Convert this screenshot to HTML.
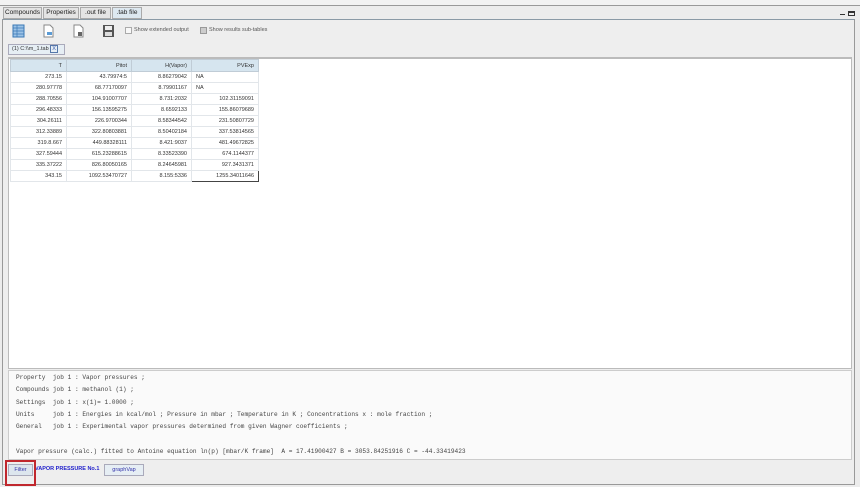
<!DOCTYPE html>
<html><head><style>
*{box-sizing:border-box;margin:0;padding:0}
body{width:860px;height:487px;background:#ececec;font-family:"Liberation Sans",sans-serif;font-size:6px;color:#333;position:relative;overflow:hidden}
.a{position:absolute}
.tab{position:absolute;top:7px;height:12px;border:1px solid #aaa;background:#e4e4e4;font-size:6.5px;text-align:center;line-height:10px;color:#222}
table{border-collapse:collapse;position:absolute;left:10px;top:59px;font-size:5.5px;color:#333;table-layout:fixed;width:248px}
td{height:11px;border:1px solid #e2e6ea;text-align:right;padding-right:4px;overflow:hidden;white-space:nowrap}
th{height:12px;background:#d6e5ef;font-weight:normal;text-align:right;padding-right:4px;border:1px solid #c0ccd6}
pre{font-family:"Liberation Mono",monospace;font-size:6.15px;line-height:12.3px;color:#444}
</style></head><body>
<div class="a" style="left:0;top:0;width:860px;height:6px;background:#f2f2f2;border-bottom:1px solid #999"></div>
<div class="a" style="left:2px;top:19px;width:853px;height:466px;border:1px solid #999;border-top:1px solid #8a9aa6;background:#eee"></div>
<div class="tab" style="left:3px;width:39px">Compounds</div>
<div class="tab" style="left:43px;width:36px">Properties</div>
<div class="tab" style="left:80px;width:31px">.out file</div>
<div class="tab" style="left:112px;width:30px;background:#dde8f0">.tab file</div>
<div class="a" style="left:840px;top:14px;width:5px;height:1px;background:#333"></div>
<div class="a" style="left:848px;top:11px;width:7px;height:5px;border:1px solid #333;border-top-width:2px"></div>
<svg class="a" style="left:12px;top:24px" width="105" height="14">
<rect x="1" y="1" width="11" height="12" fill="#9cc3e6" stroke="#3a78b5"/><path d="M1 4H12M1 7H12M1 10H12M5 1V13" stroke="#3a78b5" stroke-width=".7"/>
<path d="M32 1h6l3 3v9h-9z" fill="#fff" stroke="#888"/><rect x="35" y="8" width="5" height="3" fill="#5a9bd5"/>
<path d="M62 1h6l3 3v9h-9z" fill="#fff" stroke="#888"/><rect x="66" y="8" width="4" height="4" fill="#666"/>
<rect x="91" y="1" width="11" height="12" fill="#555"/><rect x="93" y="2" width="7" height="4" fill="#eee"/><rect x="93" y="8" width="7" height="4" fill="#ddd"/>
</svg>
<div class="a" style="left:125px;top:27px;width:7px;height:7px;border:1px solid #aaa;background:#f8f8f8"></div>
<div class="a" style="left:134px;top:27px;font-size:5.5px;color:#555">Show extended output</div>
<div class="a" style="left:200px;top:27px;width:7px;height:7px;border:1px solid #999;background:#ccc"></div>
<div class="a" style="left:209px;top:27px;font-size:5.5px;color:#555">Show results sub-tables</div>
<div class="a" style="left:8px;top:44px;width:57px;height:11px;border:1px solid #aab;background:#e6eef4;font-size:5.5px;line-height:9px;padding-left:3px">(1) C:\\m_1.tab <span style="border:1px solid #57a;color:#35a;padding:0 1px">X</span></div>
<div class="a" style="left:8px;top:57px;width:844px;height:312px;background:#fff;border:1px solid #bbb;border-top:2px solid #bbb"></div>
<table>
<colgroup><col style="width:56px"><col style="width:65px"><col style="width:60px"><col style="width:67px"></colgroup>
<tr><th>T</th><th>Pitot</th><th>H(Vapor)</th><th>PVExp</th></tr>
<tr><td>273.15</td><td>43.79974:5</td><td>8.86279042</td><td style="text-align:left;padding-left:4px">NA</td></tr>
<tr><td>280.97778</td><td>68.77170097</td><td>8.79901167</td><td style="text-align:left;padding-left:4px">NA</td></tr>
<tr><td>288.70556</td><td>104.91007707</td><td>8.731:2032</td><td>102.31159091</td></tr>
<tr><td>296.48333</td><td>156.13595275</td><td>8.6592133</td><td>155.86079689</td></tr>
<tr><td>304.26111</td><td>226.9700344</td><td>8.58344542</td><td>231.50807729</td></tr>
<tr><td>312.33889</td><td>322.80803881</td><td>8.50402184</td><td>337.53814565</td></tr>
<tr><td>319.8.667</td><td>449.88328111</td><td>8.421:9037</td><td>481.49672825</td></tr>
<tr><td>327.59444</td><td>615.23288615</td><td>8.33523390</td><td>674.1144377</td></tr>
<tr><td>335.37222</td><td>826.80050165</td><td>8.24645981</td><td>927.3431371</td></tr>
<tr><td>343.15</td><td>1092.53470727</td><td>8.155:5336</td><td style="border:1px solid #444">1255.34011646</td></tr>
</table>
<div class="a" style="left:8px;top:370px;width:844px;height:90px;background:#fafafa;border:1px solid #ccc;padding:1px 0 0 7px">
<pre>Property  job 1 : Vapor pressures ;
Compounds job 1 : methanol (1) ;
Settings  job 1 : x(1)= 1.0000 ;
Units     job 1 : Energies in kcal/mol ; Pressure in mbar ; Temperature in K ; Concentrations x : mole fraction ;
General   job 1 : Experimental vapor pressures determined from given Wagner coefficients ;

Vapor pressure (calc.) fitted to Antoine equation ln(p) [mbar/K frame]  A = 17.41900427 B = 3053.84251916 C = -44.33419423</pre></div>
<div class="a" style="left:8px;top:464px;width:25px;height:12px;border:1px solid #aab;background:#dde6ee;color:#33a;font-size:5.5px;line-height:10px;text-align:center">Filter</div>
<div class="a" style="left:35px;top:466px;color:#22c;font-weight:bold;font-size:5.5px">VAPOR PRESSURE No.1</div>
<div class="a" style="left:104px;top:464px;width:40px;height:12px;border:1px solid #aab;background:#e6eef4;color:#33a;font-size:5.5px;line-height:10px;text-align:center">graphVap</div>
<div class="a" style="left:5px;top:460px;width:31px;height:26px;border:2px solid #c0272d"></div>
</body></html>
